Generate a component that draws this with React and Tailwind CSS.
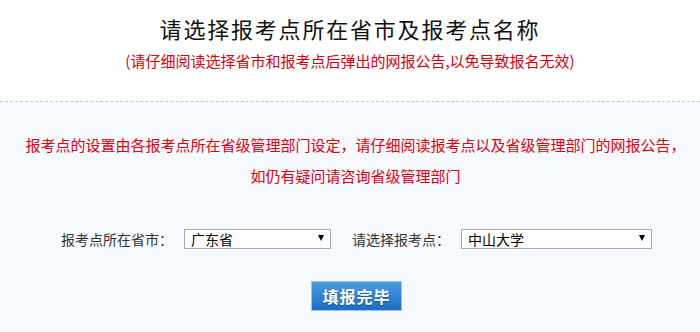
import React from 'react';

const cjk = { fontFamily: '"Noto Sans CJK SC", "Noto Sans", sans-serif' };

// 下拉框：原生 select，箭头用小三角盖在右侧
const Picker = ({ width, value }) => (
  <div className={`relative ${width} h-[20px]`}>
    <select
      defaultValue={value}
      className="appearance-none w-full h-full border border-[#a9a9a9] bg-white pl-[6px] text-[14px] leading-[18px] text-black outline-none"
      style={cjk}
    >
      <option>{value}</option>
    </select>
    <span className="absolute right-[7px] top-[6px] w-0 h-0 border-l-[3.5px] border-r-[3.5px] border-t-[6px] border-l-transparent border-r-transparent border-t-black pointer-events-none" />
  </div>
);

export default function App() {
  return (
    <div className="w-[700px] h-[332px] overflow-hidden bg-[#f6f9fd]" style={cjk}>
      {/* ── 标题 ───────────────────────────── */}
      <div className="h-[102px] bg-white border-b border-dashed border-[#c8c8c8] pt-[13px] text-center">
        <h1 className="text-[22px] leading-[30px] tracking-[1.8px] text-[#111] font-normal">
          请选择报考点所在省市及报考点名称
        </h1>
        <p className="mt-[8px] text-[15px] leading-[20px] text-[#d8000f]">
          (请仔细阅读选择省市和报考点后弹出的网报公告,以免导致报名无效)
        </p>
      </div>

      {/* ── 提示 ───────────────────────────── */}
      <div className="pt-[27px] pl-[11px] text-center text-[15px] leading-[31px] text-[#e00010]">
        <p>报考点的设置由各报考点所在省级管理部门设定，请仔细阅读报考点以及省级管理部门的网报公告，</p>
        <p>如仍有疑问请咨询省级管理部门</p>
      </div>

      {/* ── 选择 ───────────────────────────── */}
      <div className="mt-[38px] pl-[13px] flex items-center justify-center text-[14px] text-[#333]">
        <span className="leading-[20px]">报考点所在省市：</span>
        <div className="ml-[11px]">
          <Picker width="w-[147px]" value="广东省" />
        </div>
        <span className="ml-[21px] leading-[20px]">请选择报考点：</span>
        <div className="ml-[11px]">
          <Picker width="w-[191px]" value="中山大学" />
        </div>
      </div>

      <div className="mt-[32px] pl-[13px] flex justify-center">
        <button className="w-[91px] h-[30px] border border-[#93c5ef] bg-gradient-to-b from-[#4a9de3] to-[#1a6dc2] text-white text-[16px] font-bold tracking-[1px] [text-shadow:0_1px_1px_rgba(0,0,0,0.35)]">
          填报完毕
        </button>
      </div>
    </div>
  );
}
